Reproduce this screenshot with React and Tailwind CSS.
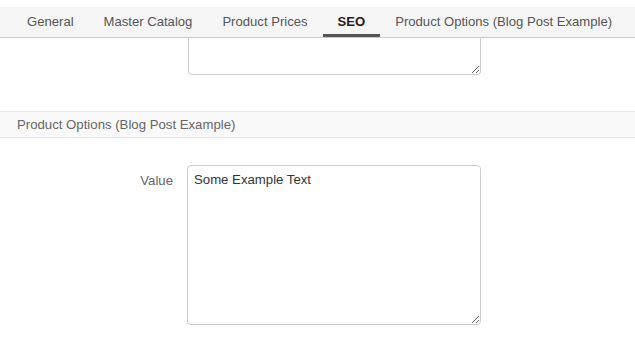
import React from "react";

const tabs = ["General", "Master Catalog", "Product Prices", "SEO", "Product Options (Blog Post Example)"];

export default function App() {
  return (
    <div className="w-[635px] h-[341px] overflow-hidden bg-white text-[13.2px]" style={{ fontFamily: '"Liberation Sans", Arial, sans-serif' }}>
      <div className="pt-[7px] bg-white">
        <div className="h-[31px] bg-[#f5f5f5] border-b border-[#cccccc] flex pl-[12px] text-[13.1px]">
          {tabs.map((t) => (
            <div
              key={t}
              className={
                "h-full px-[15px] flex items-center whitespace-nowrap border-b-[3px] -mb-px " +
                (t === "SEO" ? "border-[#555555] text-[#222222] font-bold" : "border-transparent text-[#555555]")
              }
            >
              <span className="pt-[2px]">{t}</span>
            </div>
          ))}
        </div>
      </div>
      <div className="pl-[188px]">
        <textarea
          className="block w-[293px] h-[37px] border border-t-0 border-[#cccccc] rounded-b-[4px] bg-white outline-none"
          readOnly
        />
      </div>
      <div className="mt-[36px] h-[27px] bg-[#f9f9f9] border-y border-[#e5e5e5] flex items-center pl-[17px] text-[#666666]">
        Product Options (Blog Post Example)
      </div>
      <div className="mt-[27px] flex">
        <div className="w-[173px] text-right pt-[6px] text-[#666666]">Value</div>
        <div className="pl-[14px]">
          <textarea
            className="block w-[294px] h-[160px] border border-[#cccccc] rounded-[4px] px-[6px] pt-[4px] pb-[6px] text-[#333333] bg-white outline-none text-[13.2px] resize"
            style={{ fontFamily: '"Liberation Sans", Arial, sans-serif' }}
            defaultValue="Some Example Text"
          />
        </div>
      </div>
    </div>
  );
}
